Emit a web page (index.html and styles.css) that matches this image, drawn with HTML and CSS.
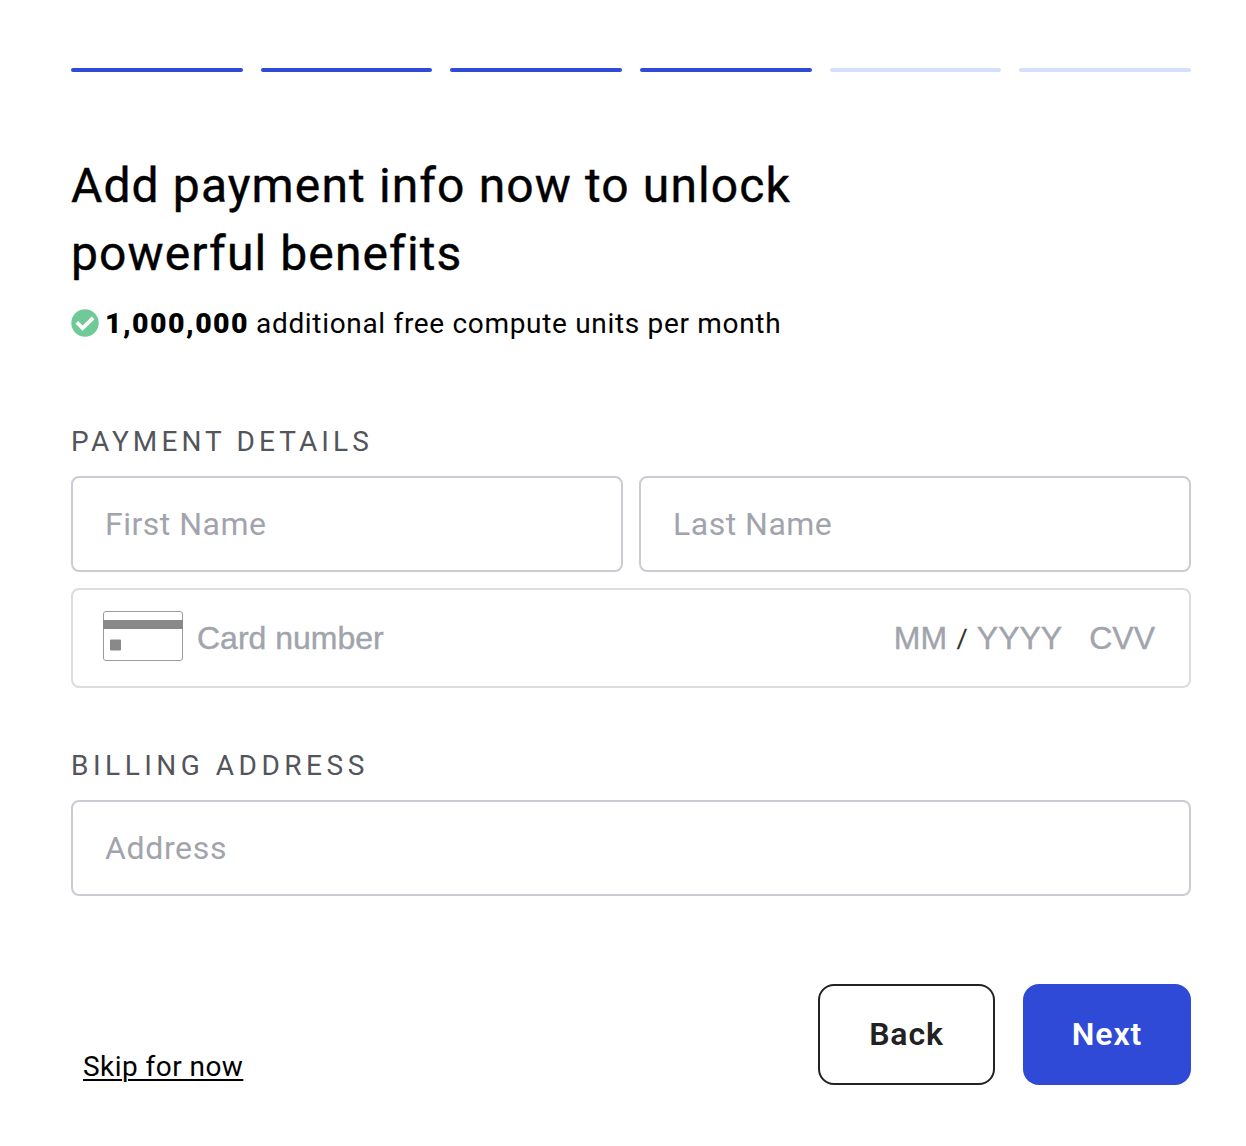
FILE: index.html
```html
<!DOCTYPE html>
<html lang="en">
<head>
<meta charset="utf-8">
<title>Payment info</title>
<link rel="stylesheet" href="styles.css">
</head>
<body>
<main class="page">
  <div class="progress">
    <span class="step done"></span><span class="step done"></span><span class="step done"></span><span class="step done"></span><span class="step"></span><span class="step"></span>
  </div>
  <h1 class="title"><span class="title-first">Add payment info now to unlock</span><br><span class="title-second">powerful benefits</span></h1>
  <p class="benefit">
    <svg class="check" viewBox="0 0 28 28"><circle cx="14" cy="14" r="13.7" fill="#6fca98"/><path d="M7.2 14.8l4.4 4.2 9.2-8.8" fill="none" stroke="#fff" stroke-width="3.8" stroke-linecap="square" stroke-linejoin="miter"/></svg>
    <strong class="amount">1,000,000</strong>
    <span class="benefit-text">additional free compute units per month</span>
  </p>
  <h2 class="label payment-label">PAYMENT DETAILS</h2>
  <div class="names">
    <div class="field"><span class="first-name">First Name</span></div>
    <div class="field"><span class="last-name">Last Name</span></div>
  </div>
  <div class="card-field">
    <svg class="card-icon" viewBox="0 0 80 50"><rect x=".5" y=".5" width="79" height="49" rx="2.5" fill="#fff" stroke="#9a9a9a"/><path d="M0 9h80v9H0z" fill="#898989"/><rect x="7" y="28.5" width="11" height="11" rx="1" fill="#898989"/></svg>
    <span class="card-number">Card number</span>
    <span class="month">MM</span><span class="slash">/</span><span class="year">YYYY</span><span class="cvv">CVV</span>
  </div>
  <h2 class="label billing-label">BILLING ADDRESS</h2>
  <div class="field"><span class="address">Address</span></div>
  <div class="actions">
    <a class="skip">Skip for now</a>
    <button class="button back">Back</button>
    <button class="button next">Next</button>
  </div>
</main>
</body>
</html>
```
FILE: styles.css
```css
* { box-sizing: border-box; }
body { margin: 0; background: #fff; color: #000; font-family: Roboto, "Liberation Sans", sans-serif; }
.page { width: 1246px; height: 1146px; padding: 68px 55px 0 71px; }
.progress { display: flex; gap: 18px; }
.step { flex: 1; height: 4px; border-radius: 2px; background: #d5e0f8; }
.step.done { background: #2f4ad6; }
.title { margin: 80px 0 0; font-size: 48px; font-weight: 400; line-height: 68px; white-space: nowrap; -webkit-text-stroke: .4px #000; }
.title-first { letter-spacing: 1.12px; }
.title-second { letter-spacing: 1.12px; }
.benefit { display: flex; align-items: center; margin: 16px 0 0; height: 38px; font-size: 28px; line-height: 38px; white-space: nowrap; }
.check { width: 28px; height: 28px; margin-right: 6px; }
.amount { width: 151px; padding-top: 2px; font-size: 28.5px; font-weight: 900; letter-spacing: 1.45px; }
.benefit-text { padding-top: 2px; letter-spacing: .68px; }
.label { margin: 0; height: 40px; font-size: 28px; font-weight: 400; line-height: 40px; color: #54555c; }
.payment-label { margin-top: 80px; margin-bottom: 14px; letter-spacing: 4.1px; }
.billing-label { margin-top: 58px; margin-bottom: 14px; letter-spacing: 4.5px; }
.names { display: grid; grid-template-columns: 1fr 1fr; gap: 16px; }
.field { display: flex; align-items: center; height: 96px; padding-left: 32px; border: 2px solid #c9cdd3; border-radius: 8px; font-size: 32px; color: #a1a4ac; }
.first-name, .last-name { letter-spacing: .5px; }
.address { letter-spacing: .65px; }
.card-field { display: flex; align-items: center; height: 100px; margin-top: 16px; padding: 0 34px 0 30px; border: 2px solid #dcdcdc; border-radius: 8px; font-family: "Liberation Sans", Arial, sans-serif; font-size: 32px; color: #a1a4ac; -webkit-text-stroke: .4px #a1a4ac; }
.card-icon { width: 80px; height: 50px; margin: 0 14px 4px 0; }
.card-number { flex: 1; }
.slash { margin: 0 11px; padding-top: 3px; font-size: 28px; color: #333; transform: skewX(-7deg); -webkit-text-stroke: 0; }
.cvv { margin-left: 27px; }
.actions { display: flex; align-items: flex-start; margin-top: 88px; }
.skip { margin: 64px auto 0 12px; font-size: 28px; line-height: 38px; letter-spacing: .45px; text-decoration: underline; text-decoration-thickness: 2px; text-underline-offset: 3px; }
.button { height: 101px; padding: 0 0 2px; border-radius: 16px; font-family: inherit; font-size: 32px; font-weight: 600; letter-spacing: .9px; }
.back { width: 177px; border: 2px solid #222; background: #fff; color: #222; }
.next { width: 168px; margin-left: 28px; border: 0; background: #2f4ad6; color: #fff; }
```
